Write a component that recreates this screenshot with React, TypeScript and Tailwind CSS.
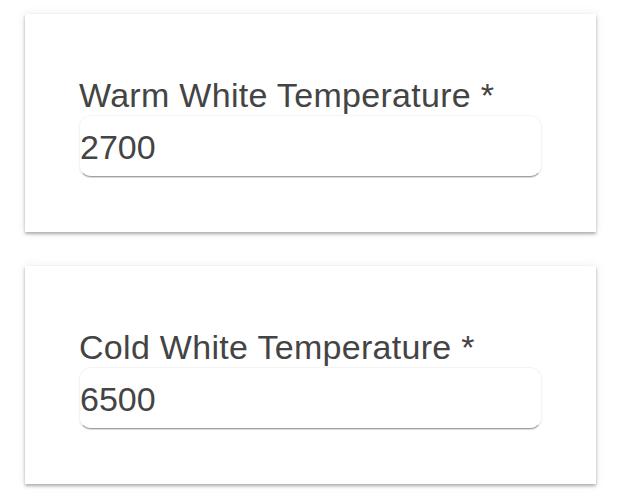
import React from "react";

function Field({ label, value }: { label: string; value: string }) {
  return (
    <div className="bg-white w-[571px] h-[218px] pt-[61px] px-[54px] shadow-[0_2px_3px_rgba(0,0,0,0.3),0_0_10px_rgba(0,0,0,0.08)]">
      <div className="text-[34px] leading-[40px] text-[#444] tracking-[0.3px]">{label}</div>
      <div className="h-[62px] rounded-[12px] border border-[#f4f4f4] border-b-[#a0a0a0] shadow-[0_1px_1px_rgba(0,0,0,0.15)] pt-[11px]">
        <div className="text-[34px] leading-[40px] text-[#444]">{value}</div>
      </div>
    </div>
  );
}

export default function App() {
  return (
    <div className="w-[624px] h-[500px] bg-white pt-[14px] pl-[25px] flex flex-col gap-[34px] font-['Liberation_Sans',Arial,sans-serif]">
      <Field label="Warm White Temperature *" value="2700" />
      <Field label="Cold White Temperature *" value="6500" />
    </div>
  );
}
